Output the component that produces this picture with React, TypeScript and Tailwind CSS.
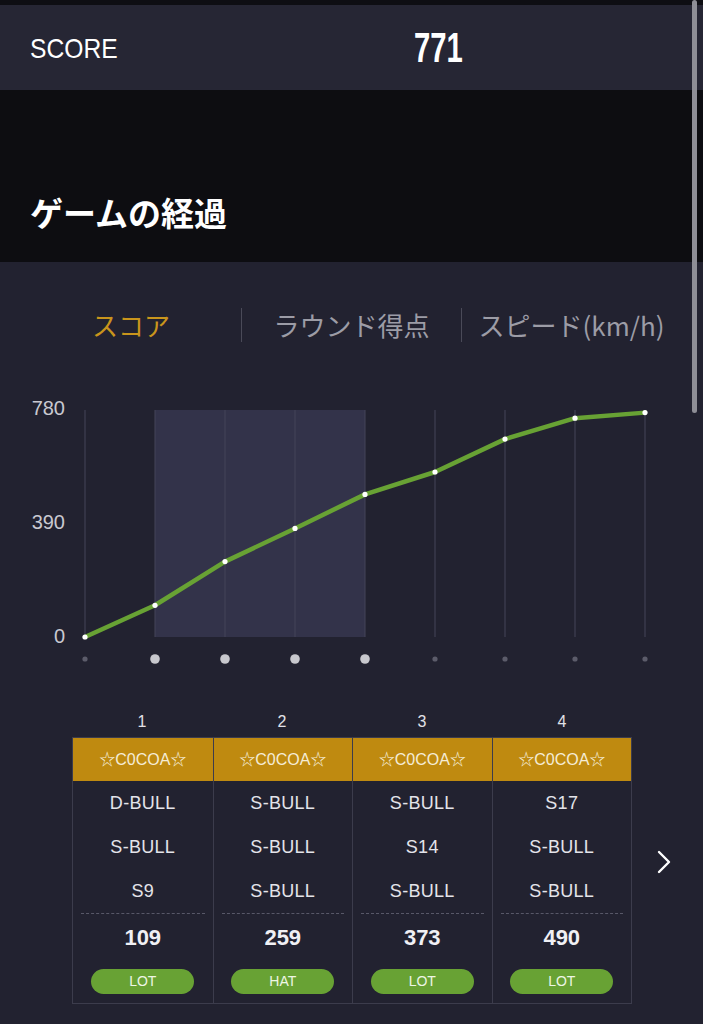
import React from "react";

const rounds = [
  { n: 1, darts: ["D-BULL", "S-BULL", "S9"], score: 109, award: "LOT" },
  { n: 2, darts: ["S-BULL", "S-BULL", "S-BULL"], score: 259, award: "HAT" },
  { n: 3, darts: ["S-BULL", "S14", "S-BULL"], score: 373, award: "LOT" },
  { n: 4, darts: ["S17", "S-BULL", "S-BULL"], score: 490, award: "LOT" },
];

const values = [0, 109, 259, 373, 490, 567, 680, 752, 771];

function Chart() {
  const x0 = 85;
  const dx = 70;
  const top = 15;
  const bottom = 242;
  const yOf = (v: number) => bottom - (v / 780) * (bottom - top);
  const pts = values.map((v, i) => [x0 + i * dx, yOf(v)] as const);
  const d = pts.map((p, i) => `${i === 0 ? "M" : "L"}${p[0]},${p[1]}`).join(" ");
  return (
    <svg width="703" height="280" viewBox="0 0 703 280" className="block">
      <rect x={155} y={top} width={210} height={bottom - top} fill="#33334a" />
      {values.map((_, i) => (
        <line
          key={i}
          x1={x0 + i * dx}
          x2={x0 + i * dx}
          y1={top}
          y2={bottom}
          stroke="#454558"
          strokeWidth={1}
        />
      ))}
      <g fill="#c9c9d1" fontSize="20" fontFamily="'Liberation Sans', Arial, sans-serif" textAnchor="end">
        <text x={65} y={20}>780</text>
        <text x={65} y={134}>390</text>
        <text x={65} y={248}>0</text>
      </g>
      <path d={d} fill="none" stroke="#68a234" strokeWidth={4.5} strokeLinejoin="round" strokeLinecap="round" />
      {pts.map((p, i) => (
        <circle key={i} cx={p[0]} cy={p[1]} r={2.6} fill="#ffffff" />
      ))}
      {values.map((_, i) => {
        const big = i >= 1 && i <= 4;
        return (
          <circle
            key={i}
            cx={x0 + i * dx}
            cy={264}
            r={big ? 4.8 : 2.6}
            fill={big ? "#c8c8cd" : "#5c5c6a"}
          />
        );
      })}
    </svg>
  );
}

export default function App() {
  return (
    <div
      className="relative w-[703px] h-[1024px] overflow-hidden bg-[#222230] text-white"
      style={{ fontFamily: "'Liberation Sans', Arial, 'Noto Sans CJK JP', sans-serif" }}
    >
      <div className="h-[5px] bg-[#0e0e13]" />
      <div className="h-[85px] bg-[#262634] flex items-center pl-[30px]">
        <div className="w-[384px] pt-[4px]">
          <span className="inline-block origin-left scale-x-[0.88] text-[28px] text-white leading-none">SCORE</span>
        </div>
        <span className="inline-block origin-left scale-x-[0.68] text-[43px] font-bold leading-none text-white">771</span>
      </div>
      <div className="h-[172px] bg-[#0d0d11] pt-[100px] pl-[30px]">
        <div
          className="text-[33px] font-bold leading-[44px] text-white"
          style={{ fontFamily: "'Noto Sans CJK JP', sans-serif" }}
        >
          ゲームの経過
        </div>
      </div>

      <div
        className="mt-[46px] ml-[21px] flex text-[26px] leading-[34px]"
        style={{ fontFamily: "'Noto Sans CJK JP', sans-serif" }}
      >
        <div className="w-[220px] h-[34px] flex items-center justify-center text-[#c9951c]">スコア</div>
        <div className="w-[220px] h-[34px] flex items-center justify-center border-l border-[#4a4a58] text-[#9c9ca6]">
          ラウンド得点
        </div>
        <div className="w-[220px] h-[34px] flex items-center justify-center border-l border-[#4a4a58] text-[#9c9ca6]">
          スピード(km/h)
        </div>
      </div>

      <div className="mt-[53px]">
        <Chart />
      </div>

      <div className="mt-[34px] flex">
        <div className="ml-[72px] w-[560px]">
          <div className="grid grid-cols-4 h-[28px]">
            {rounds.map((r) => (
              <div key={r.n} className="text-center text-[16px] leading-[26px] text-[#e2e2e8]">
                {r.n}
              </div>
            ))}
          </div>
          <div className="grid grid-cols-4 border border-[#3c3c4c]">
            {rounds.map((r, i) => (
              <div key={r.n} className={i > 0 ? "border-l border-[#3c3c4c]" : ""}>
                <div className="h-[43px] bg-[#bf8a10] flex items-center justify-center text-[16px] text-[#f5ecd6]">
                  ☆C0COA☆
                </div>
                {r.darts.map((d, j) => (
                  <div key={j} className="h-[44px] flex items-center justify-center text-[18px] tracking-[0.3px] text-[#e4e4ea]">
                    {d}
                  </div>
                ))}
                <div className="mx-[8px] border-t border-dashed border-[#585868]" />
                <div className="h-[46px] flex items-center justify-center text-[22px] font-bold text-[#f0f0f4]">
                  {r.score}
                </div>
                <div className="flex justify-center mt-[9px] mb-[9px]">
                  <div className="w-[103px] h-[25px] rounded-full bg-[#68a234] flex items-center justify-center text-[14px] text-[#eef6e4]">
                    {r.award}
                  </div>
                </div>
              </div>
            ))}
          </div>
        </div>
        <div className="w-[64px] flex justify-center pt-[141px]">
          <svg width="16" height="24" viewBox="0 0 16 24">
            <polyline points="3,2 13,12 3,22" fill="none" stroke="#ffffff" strokeWidth="2.4" strokeLinecap="round" strokeLinejoin="round" />
          </svg>
        </div>
      </div>

      <div className="absolute right-[6px] top-0 w-[5px] h-[413px] rounded-full bg-[#8e8e96]" />
    </div>
  );
}
